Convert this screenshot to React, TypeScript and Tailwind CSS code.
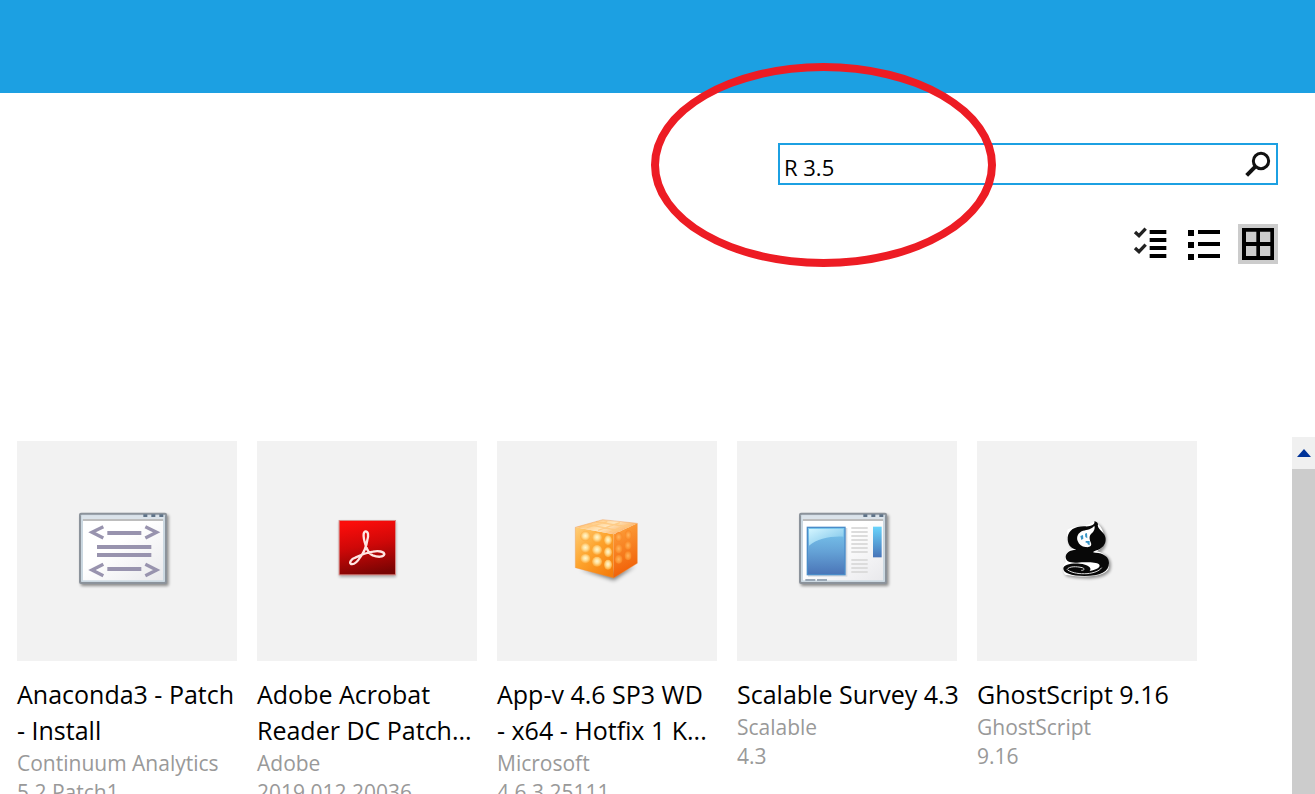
import { useState } from "react";
import type { ReactNode } from "react";

function WindowFrame({ id, children }: { id: string; children: ReactNode }) {
  return (
    <svg viewBox="6 9 330 288" className="h-24 w-[110px]" aria-hidden="true">
      <defs>
        <linearGradient id={`${id}-bg`} x1="0" y1="0" x2="1" y2="1">
          <stop offset="0.4" stopColor="#ffffff" />
          <stop offset="1" stopColor="#e9e9ec" />
        </linearGradient>
        <filter id={`${id}-shadow`} x="-10%" y="-10%" width="120%" height="125%">
          <feGaussianBlur stdDeviation="5" />
        </filter>
      </defs>
      <rect x="32" y="44" width="264" height="214" rx="5" fill="#000" opacity="0.42" filter={`url(#${id}-shadow)`} />
      <rect x="27" y="38" width="264" height="214" rx="6" fill="#8c939b" />
      <rect x="33" y="44" width="252" height="202" rx="2" fill="#cbd8e1" />
      <rect x="36" y="46" width="246" height="12" fill="#dbe3ea" />
      <rect x="39" y="57" width="240" height="6" fill="#bdbdbd" />
      <rect x="39" y="63" width="240" height="178" fill={`url(#${id}-bg)`} />
      <path d="M220 43h12v8h-12zM244 43h12v8h-12zM268 43h12v8h-12z" fill="#5f7388" />
      {children}
    </svg>
  );
}

function CodeWindow() {
  return (
    <WindowFrame id="code">
      <g fill="none" stroke="#9893ae" strokeWidth="10">
        <path d="M100 80L66 97L100 114M226 80L260 97L226 114M100 193L66 210L100 227M226 193L260 210L226 227" />
        <path d="M112 99H214M112 207H214" strokeWidth="12" />
        <path d="M81 141H244M81 165H244" strokeWidth="12" />
      </g>
    </WindowFrame>
  );
}

function LayoutWindow() {
  return (
    <WindowFrame id="layout">
      <defs>
        <linearGradient id="pane" x1="0" y1="0" x2="0" y2="1">
          <stop offset="0" stopColor="#7ac8ee" />
          <stop offset="0.5" stopColor="#65a3d7" />
          <stop offset="1" stopColor="#4b76b8" />
        </linearGradient>
        <linearGradient id="gloss" x1="0" y1="0" x2="1" y2="1">
          <stop offset="0" stopColor="#d3f5ff" />
          <stop offset="1" stopColor="#74bfe7" />
        </linearGradient>
        <linearGradient id="side" x1="0" y1="0" x2="0" y2="1">
          <stop offset="0" stopColor="#68d3fb" />
          <stop offset="1" stopColor="#4774b8" />
        </linearGradient>
      </defs>
      <rect x="54" y="84" width="118" height="146" fill="#d9dbe0" />
      <rect x="50" y="80" width="117" height="146" fill="#4a8cc9" />
      <rect x="54" y="84" width="109" height="138" fill="url(#pane)" />
      <path d="M57 87H160V110C120 108 82 116 57 137Z" fill="url(#gloss)" />
      <path d="M184 84h49M184 96h49M184 108h49M184 120h49M184 132h49M184 144h49M184 156h49M184 180h49M184 192h49M184 204h49M184 216h49" stroke="#dcdcdc" strokeWidth="6" />
      <rect x="249" y="80" width="26" height="92" fill="url(#side)" />
      <path d="M46 237h30v6H46zM81 237h30v6H81z" fill="#9aa8b6" />
    </WindowFrame>
  );
}

function AcrobatLogo() {
  return (
    <svg viewBox="-9 3 270 270" className="size-[90px]" aria-hidden="true">
      <defs>
        <linearGradient id="acrobat" x1="0.4" y1="0" x2="0.6" y2="1">
          <stop offset="0" stopColor="#fb0d0b" />
          <stop offset="0.45" stopColor="#cf0808" />
          <stop offset="1" stopColor="#790403" />
        </linearGradient>
        <filter id="acrobat-shadow" x="-10%" y="-10%" width="120%" height="125%">
          <feGaussianBlur stdDeviation="4" />
        </filter>
      </defs>
      <rect x="43" y="50" width="170" height="166" fill="#000" opacity="0.3" filter="url(#acrobat-shadow)" />
      <rect x="41" y="45" width="172" height="166" fill="#d98a86" />
      <rect x="44" y="48" width="166" height="160" fill="url(#acrobat)" />
      <path
        d="M122 79C130 79 131 92 127 105C124 125 118 141 106 156C97 171 86 179 78 177C72 173 78 162 91 158C105 151 125 143 144 140C160 136 178 140 178 148C176 157 158 157 143 151C132 146 126 134 122 121C118 109 115 96 116 87C117 81 119 79 122 79Z"
        fill="none"
        stroke="#ffe6e2"
        strokeWidth="7"
        strokeLinejoin="round"
      />
    </svg>
  );
}

const leftBumps = [
  [76, 94, 15, 15], [111, 98, 15, 15], [144, 106, 12, 15],
  [76, 129, 15, 15], [111, 135, 15, 15], [144, 142, 12, 15],
  [76, 161, 15, 14], [111, 170, 15, 15], [144, 179, 12, 15],
];
const rightBumps = [
  [176, 96, 11, 14], [205, 90, 10, 14],
  [176, 131, 11, 14], [204, 121, 10, 13],
  [176, 163, 11, 13], [204, 152, 10, 13],
];

function CubeLogo() {
  return (
    <svg viewBox="6 3 270 270" className="size-[90px]" aria-hidden="true">
      <defs>
        <linearGradient id="cube-left" x1="0" y1="0" x2="0.8" y2="1">
          <stop offset="0" stopColor="#ffce77" />
          <stop offset="0.5" stopColor="#fda32c" />
          <stop offset="1" stopColor="#f57e0d" />
        </linearGradient>
        <linearGradient id="cube-right" x1="0.3" y1="0" x2="0.5" y2="1">
          <stop offset="0" stopColor="#fda13c" />
          <stop offset="1" stopColor="#f05c04" />
        </linearGradient>
        <linearGradient id="cube-top" x1="0" y1="0.2" x2="1" y2="0.7">
          <stop offset="0" stopColor="#ffb65a" />
          <stop offset="0.5" stopColor="#ffe6bd" />
          <stop offset="1" stopColor="#fba24b" />
        </linearGradient>
        <radialGradient id="bump-left" cx="0.5" cy="0.45" r="0.52">
          <stop offset="0" stopColor="#fff7d2" />
          <stop offset="0.45" stopColor="#ffe09a" />
          <stop offset="1" stopColor="#fdaa3a" />
        </radialGradient>
        <radialGradient id="bump-right" cx="0.5" cy="0.5" r="0.5">
          <stop offset="0" stopColor="#ffb55c" />
          <stop offset="1" stopColor="#fa8824" />
        </radialGradient>
        <filter id="cube-shadow" x="-20%" y="-20%" width="140%" height="150%">
          <feGaussianBlur stdDeviation="6" />
        </filter>
      </defs>
      <path d="M60 192L162 226L226 182L160 200Z" fill="#000" opacity="0.5" filter="url(#cube-shadow)" />
      <path d="M46 67L161 88V219L46 188Z" fill="url(#cube-left)" />
      <path d="M161 88L232 55V175L161 219Z" fill="url(#cube-right)" />
      <path d="M46 67L128 44L232 55L161 88Z" fill="url(#cube-top)" />
      <path d="M80 68L142 50M114 76L180 53M148 81L210 56M82 58L182 78M108 51L208 66" stroke="#ffc77c" strokeWidth="4" opacity="0.8" />
      {leftBumps.map(([cx, cy, rx, ry]) => (
        <ellipse key={`${cx}-${cy}`} cx={cx} cy={cy} rx={rx} ry={ry} fill="url(#bump-left)" />
      ))}
      {rightBumps.map(([cx, cy, rx, ry]) => (
        <ellipse key={`${cx}-${cy}`} cx={cx} cy={cy} rx={rx} ry={ry} fill="url(#bump-right)" />
      ))}
      <path d="M46 67L128 44L232 55V175L161 219L46 188Z" fill="none" stroke="#ef9449" strokeWidth="2" opacity="0.6" />
    </svg>
  );
}

function GhostLogo() {
  return (
    <svg viewBox="6 3 270 270" className="size-[90px]" aria-hidden="true">
      <defs>
        <filter id="ghost-shadow" x="-20%" y="-20%" width="140%" height="140%">
          <feGaussianBlur stdDeviation="5" />
        </filter>
      </defs>
      <g transform="translate(45 21)">
        <path d="M40 50C70 36 100 46 120 28C148 46 156 76 144 104L130 118C160 126 168 146 160 172C144 196 90 200 30 188C18 174 24 156 32 150C24 130 36 114 52 108C34 92 34 66 40 50Z" transform="translate(5 5)" fill="#000" opacity="0.4" filter="url(#ghost-shadow)" />
        <path d="M38 52C66 38 96 46 118 28C148 46 154 80 142 106L126 118C158 124 166 150 160 172C144 196 90 198 30 188C20 176 24 158 32 150C26 130 38 112 52 110C36 90 32 66 38 52Z" fill="#fff" />
        <path d="M118 28C121 39 107 44 90 43C60 42 41 54 38 76C37 97 47 110 64 113C44 113 31 124 32 136C33 149 46 153 66 152C92 150 124 150 132 157C139 165 125 174 104 177C113 167 98 157 74 155C48 153 26 158 25 169C24 183 48 192 88 192C136 192 162 179 162 153C162 134 145 123 121 122C108 121 116 117 130 113C146 106 155 92 151 75C147 59 124 50 129 36C127 31 123 28 118 28Z" fill="#080808" />
        <path d="M118 41C112 50 96 54 84 56C68 62 64 75 68 87C72 98 81 104 91 105C104 107 111 102 108 93C104 84 101 74 108 66C118 57 121 49 118 41Z" fill="#fff" />
        <path d="M36 173C42 162 64 163 82 167C91 170 87 176 79 175M38 174C54 184 74 186 96 185C117 183 133 177 140 167" fill="none" stroke="#dcdcdc" strokeWidth="3" />
        <path d="M76 72l8-3 1 11-6 4zM90 65l6-2 1 16-6-4zM92 87h12v13l-6-3-1-5h-5z" fill="#3794c5" />
      </g>
    </svg>
  );
}

function ChecklistIcon() {
  return (
    <svg viewBox="15 267 120 120" className="size-10" aria-hidden="true">
      <path d="M74 291h50M74 315h50M74 339h50M74 363h50" stroke="#000" strokeWidth="12" />
      <path d="M30 291L42 302L62 281M30 339L42 350L62 329" fill="none" stroke="#222" strokeWidth="10" />
    </svg>
  );
}

function ListIcon() {
  return (
    <svg viewBox="177 267 120 120" className="size-10" aria-hidden="true">
      <path d="M219 291h66M219 327h66M219 363h66" stroke="#000" strokeWidth="12" />
      <path d="M189 285h18v18h-18zM189 321h18v18h-18zM189 357h18v18h-18z" />
    </svg>
  );
}

function TilesIcon() {
  return (
    <svg viewBox="339 267 120 120" className="size-10" aria-hidden="true">
      <path fillRule="evenodd" d="M351 279h96v96h-96zM363 290v31h31v-31zM405 290v31h31v-31zM363 333v30h31v-30zM405 333v30h31v-30z" />
    </svg>
  );
}

const views = [
  { name: "Multi-select", icon: <ChecklistIcon /> },
  { name: "List", icon: <ListIcon /> },
  { name: "Tiles", icon: <TilesIcon /> },
];

const apps = [
  { title: "Anaconda3 - Patch\n- Install", publisher: "Continuum Analytics", version: "5.2 Patch1", icon: <CodeWindow /> },
  { title: "Adobe Acrobat\nReader DC Patch...", publisher: "Adobe", version: "2019.012.20036", icon: <AcrobatLogo /> },
  { title: "App-v 4.6 SP3 WD\n- x64 - Hotfix 1 K...", publisher: "Microsoft", version: "4.6.3.25111", icon: <CubeLogo /> },
  { title: "Scalable Survey 4.3", publisher: "Scalable", version: "4.3", icon: <LayoutWindow /> },
  { title: "GhostScript 9.16", publisher: "GhostScript", version: "9.16", icon: <GhostLogo /> },
];

export default function App() {
  const [query, setQuery] = useState("R 3.5");
  const [view, setView] = useState("Tiles");

  return (
    <div className="flex h-screen flex-col overflow-hidden bg-white font-['Open_Sans','Noto_Sans',sans-serif] text-black">
      <header className="h-[93px] shrink-0 bg-[#1ca0e2]" />

      <div className="flex shrink-0 flex-col items-end gap-[39px] px-[37px] pt-[50px]">
        <form className="relative w-[500px]" onSubmit={(e) => e.preventDefault()}>
          <div className="flex h-[42px] items-center border-2 border-[#1ca0e2]">
            <input
              type="text"
              aria-label="Search"
              value={query}
              onChange={(e) => setQuery(e.target.value)}
              className="h-full min-w-0 flex-1 bg-transparent px-1 pt-1.5 text-[22px] outline-none"
            />
            <button type="submit" aria-label="Search" className="flex h-full w-9 items-center justify-center">
              <svg viewBox="357 45 84 84" className="size-7" aria-hidden="true">
                <circle cx="408" cy="78" r="23" fill="none" stroke="#111" strokeWidth="9" />
                <path d="M391 95L365 121" stroke="#111" strokeWidth="12" />
              </svg>
            </button>
          </div>
          <div className="pointer-events-none absolute -top-20 -left-[127px] h-[204px] w-[345px] rounded-[50%] border-8 border-[#ed1c24]" />
        </form>

        <div className="flex gap-3.5">
          {views.map(({ name, icon }) => (
            <button
              key={name}
              type="button"
              aria-label={name}
              aria-pressed={view === name}
              onClick={() => setView(name)}
              className={view === name ? "bg-[#cccccc]" : "bg-white"}
            >
              {icon}
            </button>
          ))}
        </div>
      </div>

      <main className="mt-[173px] flex min-h-0 flex-1">
        <ul className="flex min-w-0 flex-1 flex-wrap gap-5 overflow-hidden pt-1 pl-[17px]">
          {apps.map((app) => (
            <li key={app.title} className="w-[220px]">
              <div className="flex h-[220px] items-center justify-center bg-[#f2f2f2]">{app.icon}</div>
              <h2 className="pt-[15px] pb-px text-[25px] leading-9 whitespace-pre">{app.title}</h2>
              <p className="text-[21px] leading-[29px] text-[#999999]">{app.publisher}</p>
              <p className="text-[21px] leading-[29px] text-[#999999]">{app.version}</p>
            </li>
          ))}
        </ul>
        <div className="flex w-[23px] shrink-0 flex-col bg-[#cccccc]">
          <button type="button" aria-label="Scroll up" className="flex h-8 items-center justify-center bg-[#f0f0f0]">
            <svg viewBox="0 0 14 8" className="h-2 w-3.5" aria-hidden="true">
              <path d="M7 0L14 8H0Z" fill="#003399" />
            </svg>
          </button>
        </div>
      </main>
    </div>
  );
}
